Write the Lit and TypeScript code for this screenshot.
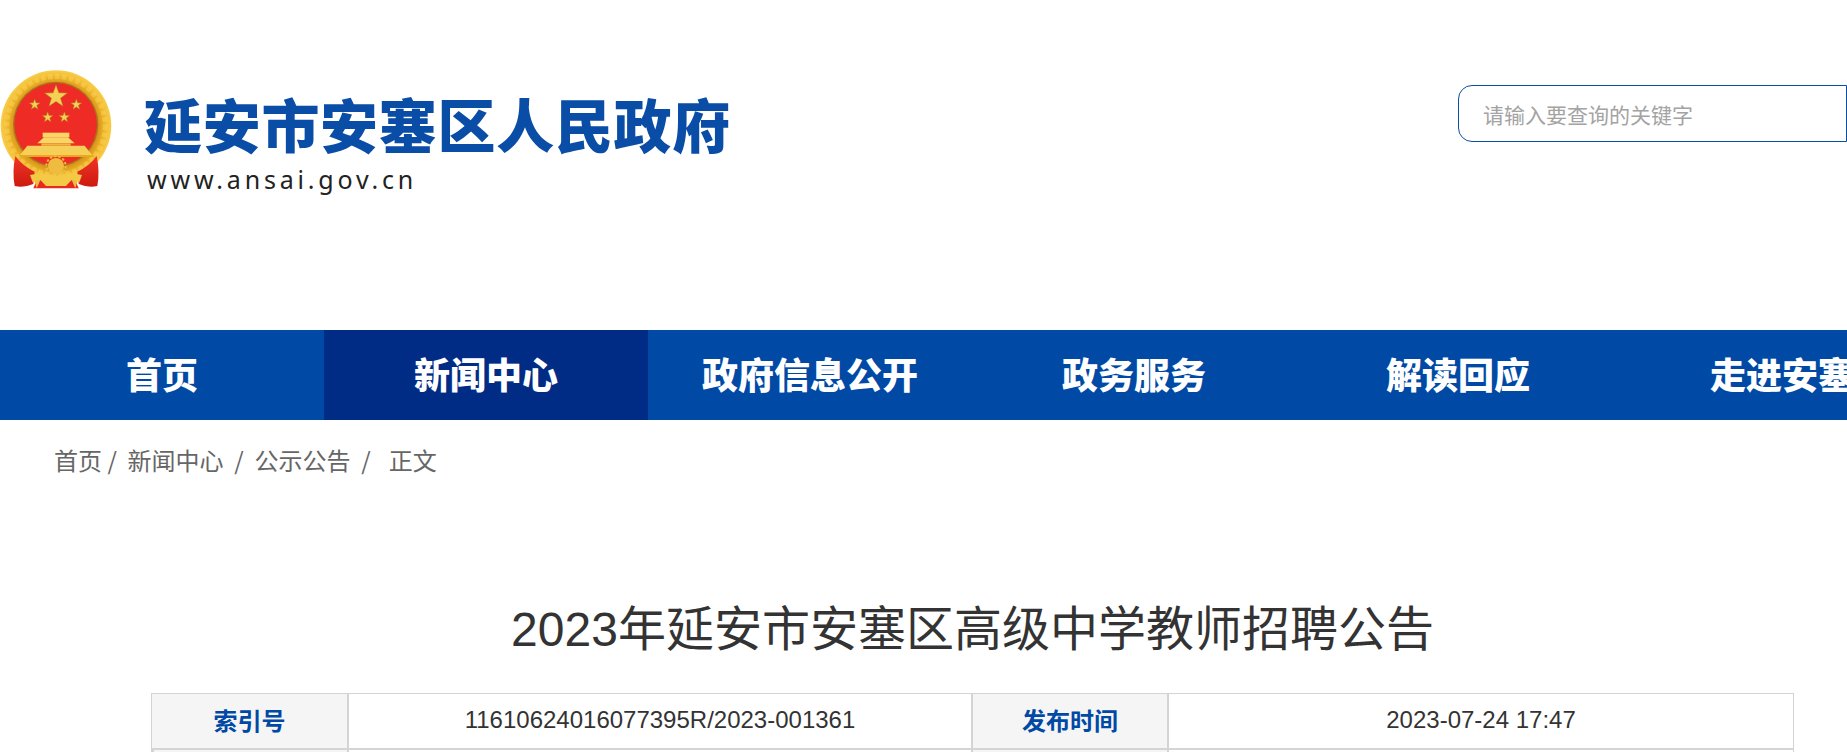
import { LitElement, html, css, svg } from "lit";
import { customElement } from "lit/decorators.js";

const star = (cx: number, cy: number, r: number) => {
  const pts: string[] = [];
  for (let i = 0; i < 10; i++) {
    const a = -Math.PI / 2 + (i * Math.PI) / 5;
    const q = i % 2 ? r * 0.4 : r;
    pts.push(`${(cx + q * Math.cos(a)).toFixed(1)},${(cy + q * Math.sin(a)).toFixed(1)}`);
  }
  return svg`<polygon points=${pts.join(" ")} fill="#f6cf55" stroke="#a8761c" stroke-width="1.5"></polygon>`;
};

const emblem = html`<svg class="emblem" viewBox="0 0 390 420" aria-hidden="true">
  <defs>
    <radialGradient id="ring" cx="50%" cy="50%" r="50%">
      <stop offset="76%" stop-color="#d8951a"></stop>
      <stop offset="90%" stop-color="#f3bc2c"></stop>
      <stop offset="100%" stop-color="#f8cd4e"></stop>
    </radialGradient>
    <linearGradient id="rib" x1="0" y1="0" x2="0" y2="1">
      <stop offset="0" stop-color="#ef3527"></stop>
      <stop offset="1" stop-color="#cf1a10"></stop>
    </linearGradient>
  </defs>
  <circle cx="168" cy="197" r="166" fill="url(#ring)"></circle>
  <circle cx="168" cy="197" r="148" fill="none" stroke="#f8d25c" stroke-opacity="0.5" stroke-width="16" stroke-dasharray="14 7"></circle>
  <circle cx="167" cy="193" r="128" fill="#a8761c"></circle>
  <circle cx="167" cy="193" r="124" fill="#ee2c25"></circle>
  ${star(168, 110, 36)}
  ${star(104, 134, 17)}
  ${star(229, 134, 17)}
  ${star(143, 172, 17)}
  ${star(193, 172, 17)}
  <path d="M128 218h80v14h-80z" fill="#f8d565"></path>
  <path d="M112 250 L132 232 H204 L224 250 Z" fill="#f8d565"></path>
  <path d="M124 250h88v7h-88z" fill="#eeb93a"></path>
  <path d="M82 257 H254 L276 285 H60 Z" fill="#f6cf58"></path>
  <path d="M58 285 H278 L276 291 H60 Z" fill="#e8a91f"></path>
  <path d="M46 288 Q68 318 104 335 L100 372 Q72 384 44 378 Q36 335 46 288 Z" fill="url(#rib)"></path>
  <path d="M290 288 Q268 318 232 335 L236 372 Q264 384 292 378 Q300 335 290 288 Z" fill="url(#rib)"></path>
  <path d="M114 352 H222 L236 385 H100 Z" fill="#e52a20"></path>
  <circle cx="168" cy="318" r="24" fill="#efbc3f"></circle>
  <circle cx="168" cy="318" r="29" fill="none" stroke="#efbc3f" stroke-width="6" stroke-dasharray="7 6"></circle>
  <path d="M90 345 Q130 334 168 348 Q206 334 246 345 L238 367 L214 361 L198 378 H138 L122 361 L98 367 Z" fill="#f3c946"></path>
  <path d="M104 364 L122 358 L110 385 Z M232 364 L214 358 L226 385 Z" fill="#efbc3f"></path>
</svg>`;

@customElement("app-root")
export class AppRoot extends LitElement {
  static styles = css`
    :host {
      display: block;
      width: 1847px;
      height: 752px;
      overflow: hidden;
      background: #fff;
      font-family: "Liberation Sans", "Noto Sans CJK SC", sans-serif;
    }
    .header {
      height: 330px;
      display: flex;
      align-items: flex-start;
    }
    .emblem {
      width: 130px;
      height: 140px;
      margin-top: 60px;
      flex: none;
    }
    .brand {
      margin-top: 83px;
      margin-left: 14px;
      display: flex;
      flex-direction: column;
    }
    .brand-name {
      font-family: "Noto Sans CJK SC", sans-serif;
      font-weight: 900;
      font-size: 58px;
      letter-spacing: 0.7px;
      line-height: 80px;
      color: #0a4da6;
      white-space: nowrap;
    }
    .brand-url {
      font-family: "Noto Sans", sans-serif;
      font-size: 25px;
      letter-spacing: 3.8px;
      line-height: 32px;
      margin-left: 3px;
      color: #222;
    }
    .search {
      margin-top: 85px;
      margin-left: auto;
      box-sizing: border-box;
      width: 389px;
      height: 57px;
      border: 1px solid #0a4da6;
      border-radius: 14px 0 0 14px;
      padding-left: 24px;
      display: flex;
      align-items: center;
      font-family: "Noto Sans CJK SC", sans-serif;
      font-size: 21px;
      color: #a3a3a3;
    }
    .nav {
      display: flex;
      height: 90px;
      background: #0049a5;
      overflow: hidden;
    }
    .nav-item {
      flex: none;
      width: 324px;
      text-align: center;
      line-height: 86px;
      font-family: "Noto Sans CJK SC", sans-serif;
      font-weight: 900;
      font-size: 36px;
      color: #fff;
    }
    .nav-item.active {
      background: #002c86;
    }
    .crumbs {
      display: flex;
      margin-top: 20px;
      padding-left: 54px;
      font-family: "Noto Sans CJK SC", sans-serif;
      font-size: 24px;
      line-height: 40px;
      color: #666;
      white-space: pre;
    }
    .crumb-current {
      margin-left: 2px;
    }
    .main {
      margin: 112px 53px 0 151px;
    }
    .title {
      margin: 0;
      font-weight: 400;
      font-size: 48px;
      line-height: 76px;
      text-align: center;
      color: #333;
    }
    .meta {
      margin-top: 25px;
      display: grid;
      grid-template-columns: 197px 622px 198px 1fr;
      border: solid #d4d4d4;
      border-width: 1px 1px 0 1px;
    }
    .cell {
      height: 56px;
      display: flex;
      align-items: center;
      justify-content: center;
      box-sizing: border-box;
      border-bottom: 2px solid #d4d4d4;
      padding-bottom: 2px;
      font-size: 24px;
      color: #333;
    }
    .label {
      background: #f5f5f5;
      font-weight: 700;
      color: #0049a5;
      border-right: 2px solid #d4d4d4;
      padding-bottom: 4px;
    }
    .value + .label {
      border-left: 2px solid #d4d4d4;
    }
  `;

  render() {
    const nav = ["首页", "新闻中心", "政府信息公开", "政务服务", "解读回应", "走进安塞"];
    return html`
      <header class="header">
        ${emblem}
        <div class="brand">
          <div class="brand-name">延安市安塞区人民政府</div>
          <div class="brand-url">www.ansai.gov.cn</div>
        </div>
        <div class="search">请输入要查询的关键字</div>
      </header>
      <nav class="nav">
        ${nav.map((n, i) => html`<div class="nav-item ${i === 1 ? "active" : ""}">${n}</div>`)}
      </nav>
      <div class="crumbs">首页 /  新闻中心  /  公示公告  /   <span class="crumb-current">正文</span></div>
      <main class="main">
        <h1 class="title">2023年延安市安塞区高级中学教师招聘公告</h1>
        <div class="meta">
          <div class="cell label">索引号</div>
          <div class="cell value">11610624016077395R/2023-001361</div>
          <div class="cell label">发布时间</div>
          <div class="cell value">2023-07-24 17:47</div>
          <div class="cell label"></div>
          <div class="cell value"></div>
          <div class="cell label"></div>
          <div class="cell value"></div>
        </div>
      </main>
    `;
  }
}
